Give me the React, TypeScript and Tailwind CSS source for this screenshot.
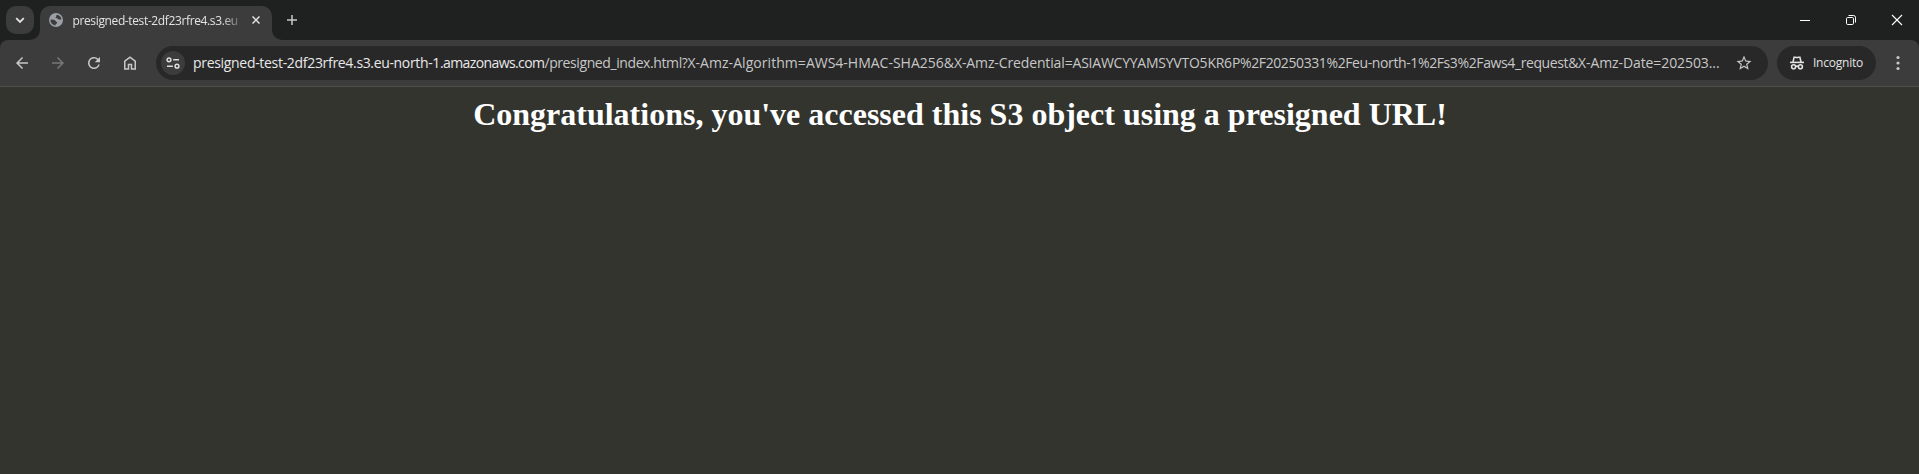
import type { ReactNode } from "react";
import { MdArrowBack, MdArrowForward, MdRefresh, MdStarBorder } from "react-icons/md";

function GlobeIcon() {
  return (
    <svg viewBox="0 0 14 14" className="size-[14px]">
      <circle cx="7" cy="7" r="7" fill="#9aa0a6" />
      <path
        d="M8.3 1.7c-.7.3-1.2.8-1.1 1.5.1.6-.6.8-.6 1.4 0 .8.9.9 1.8.9.8 0 .9.9 1.6 1.1.8.2 1.5-.1 2.4-.1A5.5 5.5 0 0 0 8.3 1.7z"
        fill="#3c3c3c"
      />
      <path
        d="M1.5 6.6c1.6-.2 3.300 0 4.200.5.9.5.6 1.400 1.500 1.600.9.2 1.300.7.9 1.400-.4.7-1.300.6-1.500 1.300-.1.5 0 .8-.3 1.100A5.500 5.500 0 0 1 1.500 6.600z"
        fill="#3c3c3c"
      />
    </svg>
  );
}

function HomeIcon() {
  return (
    <svg viewBox="0 0 24 24" className="size-[18px]" fill="currentColor">
      <path d="M6 19h3v-6h6v6h3v-9l-6-4.5L6 10v9zm-2 2V9l8-6 8 6v12h-7v-6h-2v6H4z" />
    </svg>
  );
}

function SiteSettingsIcon() {
  return (
    <svg viewBox="0 0 16 16" className="size-4" fill="none" stroke="currentColor" strokeWidth="1.5">
      <circle cx="4" cy="4.8" r="1.9" />
      <path d="M8.2 4.8H14M2 11.2h5.8" />
      <circle cx="12" cy="11.2" r="1.9" />
    </svg>
  );
}

function IncognitoIcon() {
  return (
    <svg viewBox="0 0 16 16" className="size-4" fill="none" stroke="currentColor" strokeWidth="1.6">
      <path d="M1 7.4h14" />
      <path d="M4 7.2l1.100-5h1.600l1.300.5 1.300-.5h1.600L12 7.200" />
      <circle cx="4.6" cy="11.8" r="2" />
      <circle cx="11.4" cy="11.8" r="2" />
      <path d="M6.400 11.600q1.600-1 3.200 0" />
    </svg>
  );
}

function Corner({ className }: { className: string }) {
  return (
    <svg viewBox="0 0 10 10" className={`size-[10px] self-end ${className}`}>
      <path d="M10 0v10H0A10 10 0 0 0 10 0z" fill="#3c3c3c" />
    </svg>
  );
}

function ToolbarButton({ children, disabled }: { children: ReactNode; disabled?: boolean }) {
  return (
    <button
      className={`flex h-[34px] w-9 items-center justify-center ${disabled ? "text-[#777777]" : "text-[#c7c7c7]"}`}
    >
      {children}
    </button>
  );
}

function TabStrip() {
  return (
    <div className="flex h-10 items-start pt-1.5">
      <button className="ml-1.5 flex size-7 items-center justify-center rounded-[10px] bg-[#3c3c3c] text-[#e3e3e3]">
        <svg viewBox="0 0 10 10" className="size-[10px]" fill="none" stroke="currentColor" strokeWidth="1.8">
          <path d="M1.2 3.2L5 7l3.8-3.8" />
        </svg>
      </button>
      <div className="-mr-[10px] ml-[-4px] flex h-[34px]">
        <Corner className="" />
        <div className="flex h-[34px] w-[232px] items-start rounded-t-[10px] bg-[#3c3c3c] pl-[9px]">
          <div className="mt-[7px]">
            <GlobeIcon />
          </div>
          <span className="mt-[7px] ml-[9.5px] w-[167px] font-['Open_Sans',sans-serif] text-xs leading-4 tracking-[-0.37px] whitespace-nowrap text-[#e3e3e3] [mask-image:linear-gradient(to_right,black_148px,transparent_174px)]">
            presigned-test-2df23rfre4.s3.eu
          </span>
          <svg
            viewBox="0 0 8 8"
            className="mt-[10px] ml-[12.5px] size-2"
            fill="none"
            stroke="#e3e3e3"
            strokeWidth="1.5"
          >
            <path d="M.5.5l7 7M7.5.5l-7 7" />
          </svg>
        </div>
        <Corner className="-scale-x-100" />
      </div>
      <button className="ml-[6px] flex size-7 items-center justify-center text-[#c7c7c7]">
        <svg viewBox="0 0 10 10" className="size-[10px]" fill="none" stroke="currentColor" strokeWidth="1.5">
          <path d="M5 0v10M0 5h10" />
        </svg>
      </button>
      <div className="mt-[9px] mr-[17px] ml-auto flex gap-9 text-white">
        <svg viewBox="0 0 10 10" className="size-[10px]" fill="none" stroke="currentColor">
          <path d="M0 5.5h10" />
        </svg>
        <svg viewBox="0 0 10 10" className="size-[10px] overflow-visible" fill="none" stroke="currentColor">
          <rect x=".5" y="2.5" width="7" height="7" rx="1.2" />
          <path d="M2.5.5h5a2 2 0 0 1 2 2v5" />
        </svg>
        <svg viewBox="0 0 10 10" className="size-[10px] overflow-visible" fill="none" stroke="currentColor" strokeWidth="1.1">
          <path d="M0 0l10 10M10 0L0 10" />
        </svg>
      </div>
    </div>
  );
}

function AddressBar() {
  return (
    <div className="flex h-[34px] w-[1612px] items-center rounded-full bg-[#282828] pl-[5px]">
      <button className="flex size-6 shrink-0 items-center justify-center rounded-full bg-[#3c3c3c] text-[#dcdcdc]">
        <SiteSettingsIcon />
      </button>
      <div className="ml-2 flex w-[1535px] font-['Open_Sans',sans-serif] text-sm leading-5 whitespace-nowrap text-[#c7c7c7]">
        <span className="tracking-[-0.31px] text-[#e8e8e8]">presigned-test-2df23rfre4</span>
        <span className="tracking-[-0.35px] text-[#e8e8e8]">.s3.eu-north-1</span>
        <span className="tracking-[-0.6px] text-[#e8e8e8]">.amazonaws.com</span>
        <span className="tracking-[-0.405px]">/presigned_index.html?</span>
        <span className="tracking-[0.05px]">X-Amz-Algorithm=</span>
        <span>AWS4-HMAC-SHA256&amp;</span>
        <span className="tracking-[-0.13px]">X-Amz-Credential=</span>
        <span className="tracking-[-0.235px]">ASIAWCYYAMSYVTO5KR6P</span>
        <span className="tracking-[-0.407px]">%2F20250331%2F</span>
        <span className="tracking-[-0.387px]">eu-north-1%2Fs3%2Faws4_request&amp;</span>
        <span className="tracking-[-0.09px]">X-Amz-Date=202503...</span>
      </div>
      <MdStarBorder className="ml-[7px] size-[18px] shrink-0 text-[#c7c7c7]" />
    </div>
  );
}

function Toolbar() {
  return (
    <div className="flex h-[47px] items-start rounded-t-[8px] border-b border-[#4c4d4c] bg-[#3c3c3c] pt-1.5 pl-1">
      <ToolbarButton>
        <MdArrowBack className="size-[18px]" />
      </ToolbarButton>
      <ToolbarButton disabled>
        <MdArrowForward className="size-[18px]" />
      </ToolbarButton>
      <ToolbarButton>
        <MdRefresh className="size-[18px]" />
      </ToolbarButton>
      <ToolbarButton>
        <HomeIcon />
      </ToolbarButton>
      <div className="w-2" />
      <AddressBar />
      <div className="ml-[9px] flex h-[34px] w-[99px] items-center rounded-full bg-[#282828] pl-3 text-[#e3e3e3]">
        <IncognitoIcon />
        <span className="ml-2 font-['Open_Sans',sans-serif] text-xs tracking-[-0.23px]">Incognito</span>
      </div>
      <button className="ml-[14px] flex h-[34px] w-4 items-center justify-center text-[#c7c7c7]">
        <svg viewBox="0 0 4 16" className="h-4 w-1" fill="currentColor">
          <circle cx="2" cy="2.500" r="1.6" />
          <circle cx="2" cy="8" r="1.6" />
          <circle cx="2" cy="13.500" r="1.6" />
        </svg>
      </button>
    </div>
  );
}

export default function App() {
  return (
    <div className="flex h-screen flex-col overflow-hidden bg-[#1f2120]">
      <TabStrip />
      <Toolbar />
      <main className="flex-1 bg-[#33342e] pt-[9px] pl-px">
        <h1 className="text-center font-['Liberation_Serif',serif] text-[32px] leading-[37px] font-bold text-white">
          Congratulations, you've accessed this S3 object using a presigned URL!
        </h1>
      </main>
    </div>
  );
}
